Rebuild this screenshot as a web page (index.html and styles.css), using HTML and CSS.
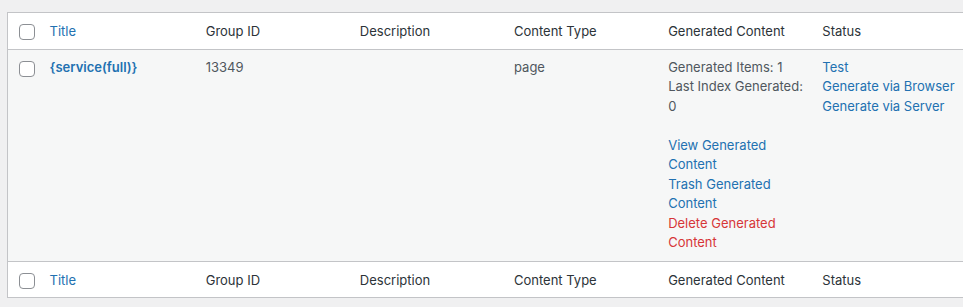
FILE: index.html
```html
<!DOCTYPE html>
<html>
<head>
<meta charset="utf-8">
<link rel="stylesheet" href="styles.css">
</head>
<body>
<div class="wrap">
<table class="list">
  <thead>
    <tr>
      <th class="check"><span class="cb"></span></th>
      <th class="col title-col"><a href="#">Title</a></th>
      <th class="col">Group ID</th>
      <th class="col">Description</th>
      <th class="col">Content Type</th>
      <th class="col">Generated Content</th>
      <th class="col">Status</th>
    </tr>
  </thead>
  <tbody>
    <tr>
      <td class="check"><span class="cb"></span></td>
      <td><a class="title" href="#">{service(full)}</a></td>
      <td>13349</td>
      <td></td>
      <td>page</td>
      <td>Generated Items: 1<br>Last Index Generated: 0<br><br><a href="#">View Generated Content</a><br><a href="#">Trash Generated Content</a><br><a class="danger" href="#">Delete Generated Content</a></td>
      <td><a href="#">Test</a><br><a href="#">Generate via Browser</a><br><a href="#">Generate via Server</a></td>
    </tr>
  </tbody>
  <tfoot>
    <tr>
      <th class="check"><span class="cb"></span></th>
      <th class="col title-col"><a href="#">Title</a></th>
      <th class="col">Group ID</th>
      <th class="col">Description</th>
      <th class="col">Content Type</th>
      <th class="col">Generated Content</th>
      <th class="col">Status</th>
    </tr>
  </tfoot>
</table>
</div>
</body>
</html>
```
FILE: styles.css
```css
html, body {
  margin: 0;
  padding: 0;
  background: #f0f0f1;
  overflow: hidden;
}
body {
  font-family: Inter, "Liberation Sans", sans-serif;
  font-size: 13px;
  line-height: 19.5px;
  color: #50575e;
}
.wrap {
  padding: 12px 0 0 7px;
}
.list {
  width: 960px;
  border-collapse: collapse;
  table-layout: fixed;
  border: 1px solid #c3c4c7;
  background: #fff;
}
.list th, .list td {
  text-align: left;
  vertical-align: top;
  padding: 8px 6px 8px 10px;
  font-weight: 400;
  box-sizing: border-box;
}
.list .col { width: 154px; }
.list .title-col { width: 156px; }
.list th {
  color: #2c3338;
  padding: 9px 6px 7px 10px;
}
.list thead tr { border-bottom: 1px solid #c3c4c7; }
.list tfoot tr { border-top: 1px solid #c3c4c7; }
.list tbody tr { background: #f6f7f7; }
.list th.check, .list td.check {
  width: 32px;
  padding: 11px 0 0 11px;
}
.cb {
  display: block;
  width: 16px;
  height: 16px;
  box-sizing: border-box;
  border: 1px solid #8c8f94;
  border-radius: 4px;
  background: #fff;
}
a {
  color: #2271b1;
  text-decoration: none;
}
a.title { font-weight: 600; }
a.danger { color: #d63638; }
```
